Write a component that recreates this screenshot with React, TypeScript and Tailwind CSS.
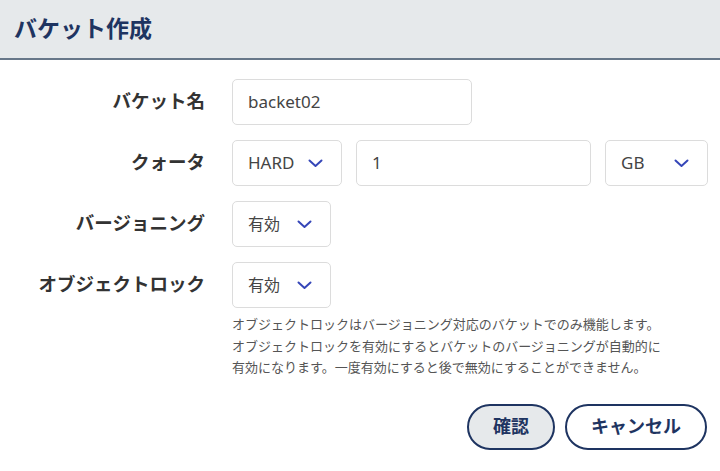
import React from 'react';

const FONT = '"Noto Sans", "Noto Sans CJK JP", sans-serif';

function Chevron() {
    return (
        <svg width="15" height="9" viewBox="0 0 15 9" fill="none" className="shrink-0">
            <path d="M1.5 1.5 L7.5 7 L13.5 1.5" stroke="#3546b8" strokeWidth="2" strokeLinecap="round" strokeLinejoin="round" />
        </svg>
    );
}

function SelectBox({ value, width, small }: { value: string; width: string; small?: boolean }) {
    return (
        <div className={`${width} h-[46px] flex items-center justify-between pl-[15px] pr-[18px] border border-[#dcdcdc] rounded-[5px] bg-white text-[#444]`}>
            <span className={small ? 'text-[16px]' : 'text-[17px]'}>{value}</span>
            <Chevron />
        </div>
    );
}

function Label({ children }: { children: React.ReactNode }) {
    return (
        <div className="h-[46px] flex items-center justify-end text-[18.5px] font-bold text-[#333] whitespace-nowrap -mt-[1px]">
            {children}
        </div>
    );
}

export default function App() {
    return (
        <div className="w-[720px] h-[471px] bg-white overflow-hidden" style={{ fontFamily: FONT }}>
            <div className="h-[60px] bg-[#e6e9eb] border-b-2 border-[#677789] flex items-center pl-[14px]">
                <h1 className="text-[23px] font-bold text-[#1e3461] -mt-[2px]">バケット作成</h1>
            </div>

            <div className="pt-[19px] grid grid-cols-[205px_1fr] items-start gap-x-[27px] gap-y-[15px]">
                <Label>バケット名</Label>
                <div className="w-[240px] h-[46px] flex items-center px-[15px] border border-[#dcdcdc] rounded-[5px] text-[17px] text-[#444]">
                    backet02
                </div>

                <Label>クォータ</Label>
                <div className="flex gap-[14px]">
                    <SelectBox value="HARD" width="w-[110px]" />
                    <div className="w-[235px] h-[46px] flex items-center px-[15px] border border-[#dcdcdc] rounded-[5px] text-[17px] text-[#444]">
                        1
                    </div>
                    <SelectBox value="GB" width="w-[103px]" />
                </div>

                <Label>バージョニング</Label>
                <SelectBox value="有効" width="w-[99px]" small />

                <Label>オブジェクトロック</Label>
                <div className="flex flex-col">
                    <SelectBox value="有効" width="w-[99px]" small />
                    <p className="mt-[6px] text-[13px] leading-[21.5px] text-[#555] whitespace-nowrap">
                        オブジェクトロックはバージョニング対応のバケットでのみ機能します。
                        <br />
                        オブジェクトロックを有効にするとバケットのバージョニングが自動的に
                        <br />
                        有効になります。一度有効にすると後で無効にすることができません。
                    </p>
                </div>
            </div>

            <div className="flex justify-end gap-[10px] pr-[13px] mt-[25px]">
                <button className="h-[46px] px-[24px] rounded-full border-2 border-[#1e3461] bg-[#e6e9eb] text-[18px] font-bold text-[#1e3461]">
                    確認
                </button>
                <button className="h-[46px] px-[24px] rounded-full border-2 border-[#1e3461] bg-white text-[18px] font-bold text-[#1e3461]">
                    キャンセル
                </button>
            </div>
        </div>
    );
}
